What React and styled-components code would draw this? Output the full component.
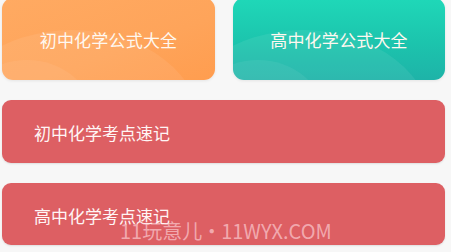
import React from 'react'
import styled, { createGlobalStyle } from 'styled-components'

const GlobalStyle = createGlobalStyle`
    html, body {
        margin: 0;
        padding: 0;
        background: #f7f7f7;
        font-family: "Noto Sans CJK SC", "Noto Sans", sans-serif;
    }
`

const Page = styled.div`
    position: relative;
    width: 451px;
    height: 252px;
    overflow: hidden;
    box-sizing: border-box;
    padding: 0 6px 0 2px;
    display: flex;
    flex-direction: column;
    gap: 20px;
`

const CardRow = styled.div`
    display: grid;
    grid-template-columns: 213px 212px;
    justify-content: space-between;
    margin-top: -2px;
`

const Card = styled.div`
    position: relative;
    height: 82px;
    border-radius: 11px;
    overflow: hidden;
    display: flex;
    align-items: center;
    justify-content: center;
    color: #fff8f0;
    font-size: 17px;
    letter-spacing: 0.2px;
    background: ${(props) => props.$bg};
    box-shadow: 0 1px 3px rgba(0, 0, 0, 0.08);

    &::before {
        content: '';
        position: absolute;
        left: -60px;
        bottom: -150px;
        width: 260px;
        height: 200px;
        border-radius: 50%;
        background: rgba(255, 255, 255, 0.07);
    }

    &::after {
        content: '';
        position: absolute;
        left: -40px;
        bottom: -90px;
        width: 130px;
        height: 110px;
        border-radius: 50%;
        background: rgba(255, 255, 255, 0.06);
    }
`

const CardText = styled.span`
    position: relative;
    z-index: 1;
`

const Bar = styled.div`
    height: ${(props) => props.$h}px;
    border-radius: 9px;
    background: #dd5f63;
    display: flex;
    align-items: center;
    padding-left: 32px;
    padding-top: 2px;
    box-sizing: border-box;
    color: #fff5f5;
    font-size: 17px;
    box-shadow: 0 1px 2px rgba(0, 0, 0, 0.1);
`

const Watermark = styled.div`
    position: absolute;
    left: 120px;
    top: 216px;
    font-family: "Noto Sans CJK SC", "Noto Sans", sans-serif;
    font-size: 20px;
    word-spacing: -5px;
    color: rgba(255, 220, 225, 0.6);
    white-space: nowrap;
    pointer-events: none;
`

const cards = [
    { title: '初中化学公式大全', bg: 'linear-gradient(160deg, #ffaa62 0%, #fea45a 60%, #ff9d4f 100%)' },
    { title: '高中化学公式大全', bg: 'linear-gradient(180deg, #1fd8b8 0%, #1cc4ad 55%, #1eb3a8 100%)' },
]

const bars = [
    { title: '初中化学考点速记', h: 63 },
    { title: '高中化学考点速记', h: 62 },
]

export default function App() {
    return (
        <>
            <GlobalStyle />
            <Page>
                <CardRow>
                    {cards.map((c) => (
                        <Card key={c.title} $bg={c.bg}>
                            <CardText>{c.title}</CardText>
                        </Card>
                    ))}
                </CardRow>
                {bars.map((b) => (
                    <Bar key={b.title} $h={b.h}>
                        {b.title}
                    </Bar>
                ))}
                <Watermark>11玩意儿 • 11WYX.COM</Watermark>
            </Page>
        </>
    )
}
